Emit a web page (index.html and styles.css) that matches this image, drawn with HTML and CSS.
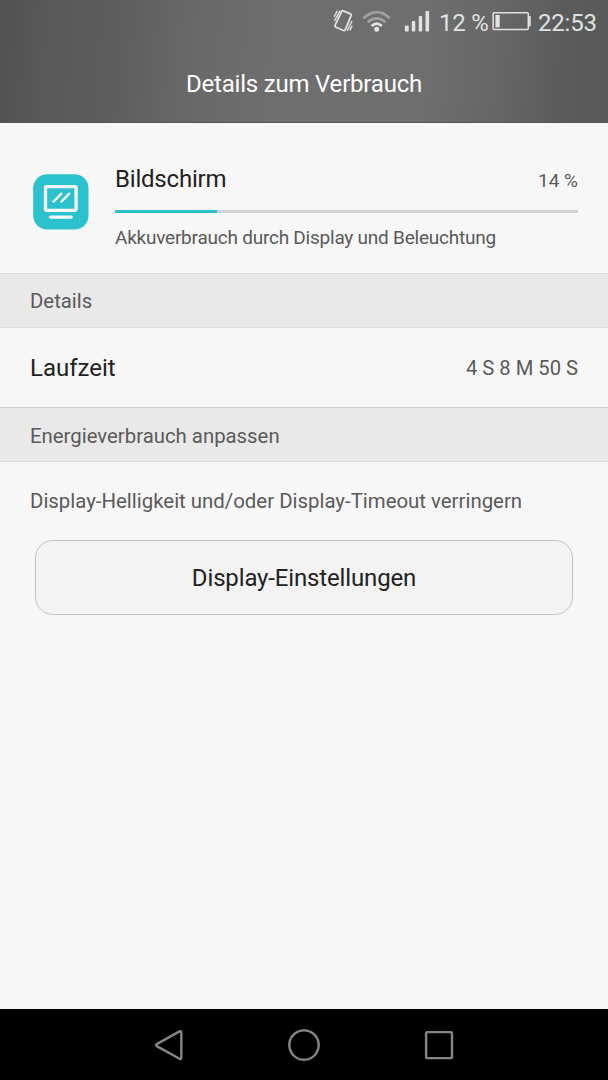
FILE: index.html
```html
<!DOCTYPE html>
<html lang="de">
<head>
<meta charset="utf-8">
<title>Details zum Verbrauch</title>
<link rel="stylesheet" href="styles.css">
</head>
<body>
<div class="screen">
  <header class="header">
    <div class="status">
      <svg class="status-icons" width="104" height="44" viewBox="330 0 104 44" fill="none">
        <g stroke="#dfe3e1" stroke-width="1.8" stroke-linecap="round" stroke-linejoin="round">
          <path d="M341.7 11.3Q342.2 10.4 343.2 10.8L350.4 13.9Q351.5 14.5 351.1 15.6L345.2 29.8Q344.6 31 343.4 30.5L335.6 27Q334.5 26.4 335 25.3Z"/>
          <path d="M337.2 11.2L334.3 16.4M340 11.2L334.7 20.4M351.8 21.4L347.5 30.2M351.9 26.4L350.1 29.9" stroke-width="1.4"/>
        </g>
        <g stroke-width="2.7">
          <path d="M363.6 18.2Q376.7 6.2 389.8 18.2" stroke="#a0a2a1"/>
          <path d="M367.9 22.2Q376.7 14.6 385.5 22.2" stroke="#a0a2a1"/>
          <path d="M371.6 26Q376.7 21.4 381.8 26" stroke="#e2e5e3"/>
        </g>
        <circle cx="376.7" cy="29.2" r="2.5" fill="#e2e5e3"/>
        <g fill="#dfe3e1">
          <rect x="404.8" y="25.6" width="3.9" height="6" rx=".8"/>
          <rect x="411.8" y="21" width="3.5" height="10.6" rx=".8"/>
          <rect x="418.7" y="15.9" width="3.5" height="15.7" rx=".8"/>
          <rect x="425.5" y="11" width="3.6" height="20.6" rx=".8"/>
        </g>
      </svg>
      <span class="status-percent">12 %</span>
      <svg class="battery" width="40" height="44" viewBox="492 0 40 44" fill="none">
        <rect x="493.1" y="12.7" width="35.2" height="16.9" rx="1" stroke="#dfe3e1" stroke-width="1.5"/>
        <rect x="495.4" y="15" width="4.3" height="12.4" fill="#dfe3e1"/>
        <path d="M529 16.5H530.3V26H529Z" fill="#dfe3e1" stroke="#dfe3e1" stroke-width=".8"/>
      </svg>
      <span class="status-time">22:53</span>
    </div>
    <h1 class="title">Details zum Verbrauch</h1>
  </header>
  <main class="content">
    <section class="usage">
      <svg class="usage-icon" width="56" height="56" viewBox="0 0 56 56" fill="none" stroke="#f7f7f7" stroke-linecap="round" stroke-linejoin="round">
        <rect x=".2" y=".2" width="55.3" height="55.4" rx="14" fill="#2cc2cd" stroke="none"/>
        <rect x="12.5" y="12.7" width="30.6" height="23.6" rx=".8" stroke-width="3.3"/>
        <path d="M17.5 43.1H38.2" stroke-width="3.3"/>
        <path d="M20.5 27.6L28.4 19.6M28.4 27.6L36.2 19.6" stroke-width="2.3"/>
      </svg>
      <div class="usage-body">
        <div class="usage-head">
          <span class="name">Bildschirm</span>
          <span class="percent">14 %</span>
        </div>
        <div class="bar"><div class="bar-fill" style="width:22%"></div></div>
        <p class="description">Akkuverbrauch durch Display und Beleuchtung</p>
      </div>
    </section>
    <h2 class="section">Details</h2>
    <div class="row">
      <span class="runtime-label">Laufzeit</span>
      <span class="runtime">4 S 8 M 50 S</span>
    </div>
    <h2 class="section section-adjust">Energieverbrauch anpassen</h2>
    <p class="hint">Display-Helligkeit und/oder Display-Timeout verringern</p>
    <button class="settings">Display-Einstellungen</button>
  </main>
  <nav class="navbar">
    <svg width="608" height="71" viewBox="0 1009 608 71" fill="none" stroke="#858585" stroke-width="2.4" stroke-linejoin="round">
      <path d="M156.7 1044.1L179.6 1031.4Q181.3 1030.7 181.3 1032.3V1057.7Q181.3 1059.6 179.6 1058.8L156.7 1046.1Q155.5 1045.1 156.7 1044.1Z"/>
      <circle cx="304" cy="1045.1" r="14.7"/>
      <rect x="426.1" y="1032.1" width="25.9" height="26" rx="1"/>
    </svg>
  </nav>
</div>
</body>
</html>
```
FILE: styles.css
```css
* { box-sizing: border-box; }
body {
  margin: 0;
  font-family: Roboto, "Liberation Sans", sans-serif;
  color: #5a5a5a;
  background: #f7f7f7;
}
h1, h2, p { margin: 0; font-weight: 400; }
span, h1, h2, p, button { white-space: nowrap; }
svg { display: block; flex: none; }
.screen {
  width: 608px;
  height: 1080px;
  display: flex;
  flex-direction: column;
  overflow: hidden;
}
.header {
  height: 123px;
  background: linear-gradient(94deg, #515151 0%, #595959 8%, #5d5d5d 19%, #686868 31%, #6e6e6e 45%, #6e6e6e 70%, #666 82%, #5b5b5b 92%, #595959 100%);
  border-bottom: 1px solid #555;
}
.status {
  height: 44px;
  padding-left: 330px;
  display: flex;
  color: #dfe3e1;
  font-size: 24px;
  line-height: 46px;
  letter-spacing: -0.2px;
}
.status-percent { flex: none; width: 53px; margin-left: 5px; }
.battery { margin-right: 6px; }
.status-time { flex: none; }
.title {
  color: #fff;
  font-size: 24px;
  line-height: 30px;
  padding-top: 25px;
  letter-spacing: -0.2px;
  text-align: center;
}
.content { flex: 1; }
.usage {
  height: 150px;
  padding: 37px 30px 0 33px;
  display: flex;
  gap: 26px;
}
.usage-icon { margin-top: 14px; }
.usage-body { flex: 1; }
.usage-head {
  height: 50px;
  display: flex;
  justify-content: space-between;
  line-height: 38px;
}
.name { color: #222; font-size: 24px; line-height: 39px; letter-spacing: -0.2px; }
.percent { font-size: 19px; line-height: 42px; }
.bar { height: 3px; background: #d0d3d5; }
.bar-fill { height: 3px; background: #2cc2cd; }
.description {
  font-size: 19px;
  line-height: 24px;
  padding-top: 13px;
  letter-spacing: -0.23px;
}
.section {
  height: 55px;
  padding-left: 30px;
  font-size: 20.35px;
  line-height: 54px;
  background: #e9e9e9;
  border-top: 1px solid #dedede;
  border-bottom: 1px solid #dedede;
}
.row {
  height: 79px;
  padding: 0 30px;
  display: flex;
  justify-content: space-between;
  line-height: 80px;
}
.runtime-label { color: #222; font-size: 24px; line-height: 81px; }
.runtime { font-size: 20.2px; }
.section-adjust { border-top-color: #cfcfcf; line-height: 56px; }
.hint { font-size: 20.4px; line-height: 78px; height: 78px; padding-left: 30px; }
.settings {
  display: block;
  width: 538px;
  height: 75px;
  margin: 0 auto;
  padding: 0;
  border: 1px solid #c2c2c2;
  border-radius: 18px;
  background: #f3f3f3;
  color: #222;
  font-family: inherit;
  font-size: 24px;
  letter-spacing: -0.15px;
}
.navbar { height: 71px; background: #000; }
```
